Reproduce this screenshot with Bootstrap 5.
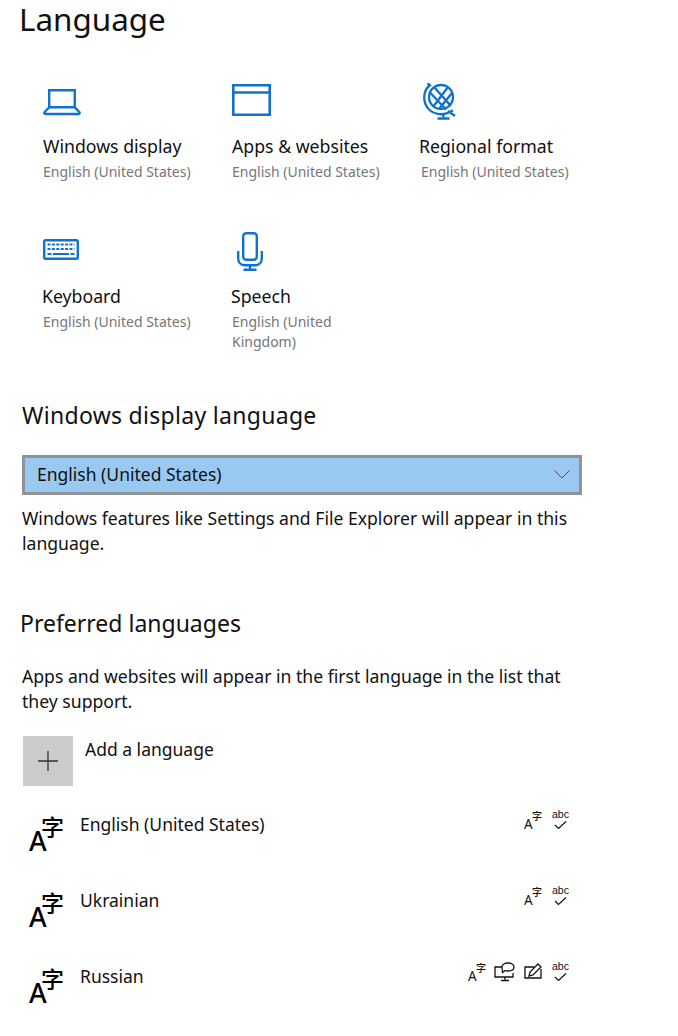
<!DOCTYPE html>
<html lang="en">
<head>
<meta charset="utf-8">
<title>Language</title>
<link href="https://cdn.jsdelivr.net/npm/bootstrap@5.3.0/dist/css/bootstrap.min.css" rel="stylesheet">
<style>
html,body{margin:0;background:#fff;overflow:hidden}
body{font-family:"Noto Sans","Open Sans",sans-serif;color:#111;font-size:17.5px;line-height:25px;width:678px;height:1036px}
.pg-title{font-size:31.4px;line-height:38px;font-weight:400;margin:0 0 0 19px;height:82px}
.tile-grid{display:grid;grid-template-columns:189px 189px 170px;margin-left:43px}
.tile{height:150px;display:flex;flex-direction:column}
.tile-ic{height:50px;display:block;flex:none;overflow:visible}
.tile-name{font-size:17.7px;line-height:24px;margin-top:2px}
.nudge-1{margin-left:-1px}
.nudge-2{margin-left:-2px}
.tile-sub{font-size:14px;line-height:20px;color:#767676;margin-top:4px;width:135px}
.tile-sub.wide{width:160px}
.h-sec{font-size:23px;line-height:30px;font-weight:400;margin:0}
.tile-h{margin:18px 0 0 22px;letter-spacing:.3px}
.dd{width:560px;height:40px;background:#99c8f0;border:3px solid #8f9296;margin:25px 0 0 22px;padding:0 9px 2px 12px;font-size:17.5px}
.para{margin:0 0 0 22px;width:556px;font-size:17.6px;line-height:25px}
.para-a{margin-top:11px}
.pref-h{margin:52px 0 0 20px}
.para-b{margin-top:26px}
.add-tile{width:50px;height:50px;background:#cbcbcb}
.add-row{margin:22px 0 0 23px;gap:12px}
.add-txt{line-height:26px}
.lang-list{margin-top:25px}
.lang-row{height:76px;width:541px;margin-left:29px}
.lang-glyph{position:relative;width:51px;flex:none;height:50px}
.g-a{position:absolute;left:0;top:15px;font-size:27px;line-height:30px;font-weight:500;color:#000;letter-spacing:-6px}
.g-z{position:absolute;left:12px;top:1px;font-size:23px;line-height:28px;font-weight:500;color:#000;font-family:"Noto Sans CJK SC",sans-serif}
.lang-name{line-height:26px}
.feat{gap:9px}
.feat.many{gap:8px}
.feat-i{position:relative;width:19px;height:22px;display:block;color:#111}
.f-a{position:absolute;left:1px;top:6px;font-size:13.500px;line-height:15px;letter-spacing:-1px}
.f-z{position:absolute;left:9px;top:-1px;font-size:10px;line-height:12px;font-weight:500;font-family:"Noto Sans CJK SC",sans-serif}
.f-abc{position:absolute;left:1px;top:-3px;font-size:10.5px;line-height:13px;font-family:"Liberation Sans",sans-serif}
.chk{left:3px;top:10px}
.ft-svg{margin-top:-1px}
</style>
</head>
<body>
<h1 class="pg-title">Language</h1>

<div class="tile-grid">
  <div class="tile">
    <svg class="tile-ic" width="60" height="50" viewBox="0 0 60 50" fill="none" stroke="#0f72cc" stroke-width="2.400"><path d="M6.200 8.200h25.600v17H6.200z"/><path d="M6 25.500 1.700 30c-.8 1-.3 2 1 2h32.600c1.300 0 1.800-1 1-2L32 25.500"/></svg>
    <div class="tile-name">Windows display</div>
    <div class="tile-sub wide">English (United States)</div>
  </div>
  <div class="tile">
    <svg class="tile-ic" width="60" height="50" viewBox="0 0 60 50" fill="none" stroke="#0f72cc" stroke-width="2.600"><path d="M1.300 3.300h36.400v29.400H1.300zM1.300 10.500h36.400"/></svg>
    <div class="tile-name">Apps &amp; websites</div>
    <div class="tile-sub wide">English (United States)</div>
  </div>
  <div class="tile">
    <svg class="tile-ic" width="60" height="50" viewBox="0 0 60 50" fill="none" stroke="#0f72cc" stroke-width="2.300"><circle cx="20" cy="15" r="12"/><path d="M13 5 30 24M9.500 11 25 27.500M27 5 12 25M31 11 18 27"/><path d="M9 3C1.500 9 1.500 21 8 27.500c6 5.500 14.500 6 21 2.500l3-1.800M6.500 1.500 10 4M27 29l7 5M22.500 32v4M16.500 36.500h12"/></svg>
    <div class="tile-name nudge-2">Regional format</div>
    <div class="tile-sub wide">English (United States)</div>
  </div>
  <div class="tile">
    <svg class="tile-ic" width="60" height="50" viewBox="0 0 60 50" fill="none" stroke="#0f72cc" stroke-width="2.400"><rect x="1.200" y="8.200" width="33.600" height="18.600" rx="1.500"/><path stroke-width="2" stroke-dasharray="3 1.400" d="M4.500 12.500h27M4.500 17h27"/><path stroke-width="2" d="M4.500 22h4M10 22h16M27.500 22h4"/></svg>
    <div class="tile-name nudge-1">Keyboard</div>
    <div class="tile-sub wide">English (United States)</div>
  </div>
  <div class="tile">
    <svg class="tile-ic" width="60" height="50" viewBox="0 0 60 50" fill="none" stroke="#0f72cc" stroke-width="2.400"><rect x="11.200" y="1.200" width="13.600" height="26.600" rx="3"/><path d="M6.200 19v7.500c0 4 3 6.800 7 6.800h9.600c4 0 7-2.800 7-6.800V19M18 33v4.500M11.500 37.800h13"/></svg>
    <div class="tile-name nudge-1">Speech</div>
    <div class="tile-sub">English (United Kingdom)</div>
  </div>
</div>

<h2 class="h-sec tile-h">Windows display language</h2>
<div class="dd d-flex align-items-center justify-content-between">
  <span>English (United States)</span>
  <svg width="16" height="9" viewBox="0 0 16 9" fill="none" stroke="#4a5560"><path d="M.5.500 8 8 15.500.500"/></svg>
</div>
<p class="para para-a">Windows features like Settings and File Explorer will appear in this language.</p>

<h2 class="h-sec pref-h">Preferred languages</h2>
<p class="para para-b">Apps and websites will appear in the first language in the list that they support.</p>

<div class="d-flex add-row">
  <div class="add-tile d-flex align-items-center justify-content-center">
    <svg width="22" height="22" viewBox="0 0 22 22" stroke="#333" stroke-width="1.300"><path d="M11 1v20M1 11h20"/></svg>
  </div>
  <div class="add-txt">Add a language</div>
</div>

<div class="lang-list">
  <div class="lang-row d-flex">
    <div class="lang-glyph"><span class="g-a">A</span><span class="g-z">字</span></div>
    <div class="lang-name flex-grow-1">English (United States)</div>
    <div class="feat d-flex">
      <span class="feat-i"><span class="f-a">A</span><span class="f-z">字</span></span>
      <span class="feat-i"><span class="f-abc">abc</span><svg class="position-absolute chk" width="13" height="9" viewBox="0 0 13 9" fill="none" stroke="#111" stroke-width="1.200"><path d="M1 4 4.500 7.500 12 .5"/></svg></span>
    </div>
  </div>
  <div class="lang-row d-flex">
    <div class="lang-glyph"><span class="g-a">A</span><span class="g-z">字</span></div>
    <div class="lang-name flex-grow-1">Ukrainian</div>
    <div class="feat d-flex">
      <span class="feat-i"><span class="f-a">A</span><span class="f-z">字</span></span>
      <span class="feat-i"><span class="f-abc">abc</span><svg class="position-absolute chk" width="13" height="9" viewBox="0 0 13 9" fill="none" stroke="#111" stroke-width="1.200"><path d="M1 4 4.500 7.500 12 .5"/></svg></span>
    </div>
  </div>
  <div class="lang-row d-flex">
    <div class="lang-glyph"><span class="g-a">A</span><span class="g-z">字</span></div>
    <div class="lang-name flex-grow-1">Russian</div>
    <div class="feat many d-flex">
      <span class="feat-i"><span class="f-a">A</span><span class="f-z">字</span></span>
      <svg class="ft-svg" width="21" height="20" viewBox="0 0 21 20" fill="none" stroke="#111" stroke-width="1.300"><path d="M8 5H1v10h18v-4M7 18.500h8M11 15v3.500"/><path d="M8 5c0-2.500 3-4 6-4s6 1.500 6 4-2.500 4-6 4c-1 0-2 0-3-.5L8.500 10.500z" fill="#fff"/></svg>
      <svg class="ft-svg" width="20" height="20" viewBox="0 0 20 20" fill="none" stroke="#111" stroke-width="1.300"><path d="M11 5H2v11h16V7"/><path d="M6 14l1-4 8-8 3 3-8 8z" fill="#fff"/></svg>
      <span class="feat-i"><span class="f-abc">abc</span><svg class="position-absolute chk" width="13" height="9" viewBox="0 0 13 9" fill="none" stroke="#111" stroke-width="1.200"><path d="M1 4 4.500 7.500 12 .5"/></svg></span>
    </div>
  </div>
</div>
</body>
</html>
